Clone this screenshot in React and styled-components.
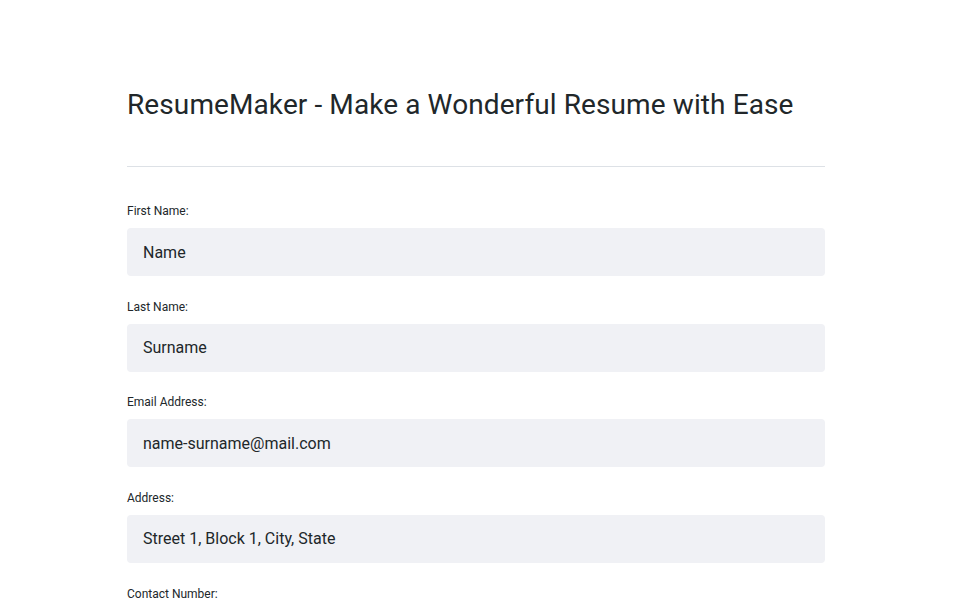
import React from 'react';
import styled, { createGlobalStyle } from 'styled-components';

const fields = [
  { label: 'First Name:', value: 'Name' },
  { label: 'Last Name:', value: 'Surname' },
  { label: 'Email Address:', value: 'name-surname@mail.com' },
  { label: 'Address:', value: 'Street 1, Block 1, City, State' },
  { label: 'Contact Number:', value: '+1 234 567 890' },
];

const App = () => {
  return (
    <Page>
      <GlobalStyle />
      <Title>ResumeMaker - Make a Wonderful Resume with Ease</Title>
      <Divider />
      <Form>
        {fields.map(f => (
          <Field key={f.label}>
            <Label>{f.label}</Label>
            <Input defaultValue={f.value} />
          </Field>
        ))}
      </Form>
    </Page>
  );
};

export default App;

const GlobalStyle = createGlobalStyle`
  body {
    margin: 0;
    background: #fff;
    font-family: Roboto, 'Liberation Sans', sans-serif;
    color: #21272a;
  }
`;

const Page = styled.main`
  width: 698px;
  margin-left: 127px;
  padding-top: 87px;
`;

const Title = styled.h1`
  margin: 0;
  font-size: 28px;
  font-weight: 400;
  line-height: 36px;
  letter-spacing: 0.1px;
  white-space: nowrap;
  color: #21272a;
`;

const Divider = styled.hr`
  margin: 43px 0 0;
  border: 0;
  border-top: 1px solid #dde1e6;
`;

const Form = styled.form`
  display: flex;
  flex-direction: column;
  gap: 21.67px;
  padding-top: 35px;
`;

const Field = styled.div`
  display: flex;
  flex-direction: column;
  gap: 8px;
`;

const Label = styled.label`
  font-size: 12px;
  line-height: 18px;
  color: #21272a;
`;

const Input = styled.input`
  box-sizing: border-box;
  height: 48px;
  padding: 0 16px;
  border: 0;
  border-radius: 4px;
  background: #f0f1f5;
  font-family: inherit;
  font-size: 16px;
  color: #21272a;
  outline: none;
`;
